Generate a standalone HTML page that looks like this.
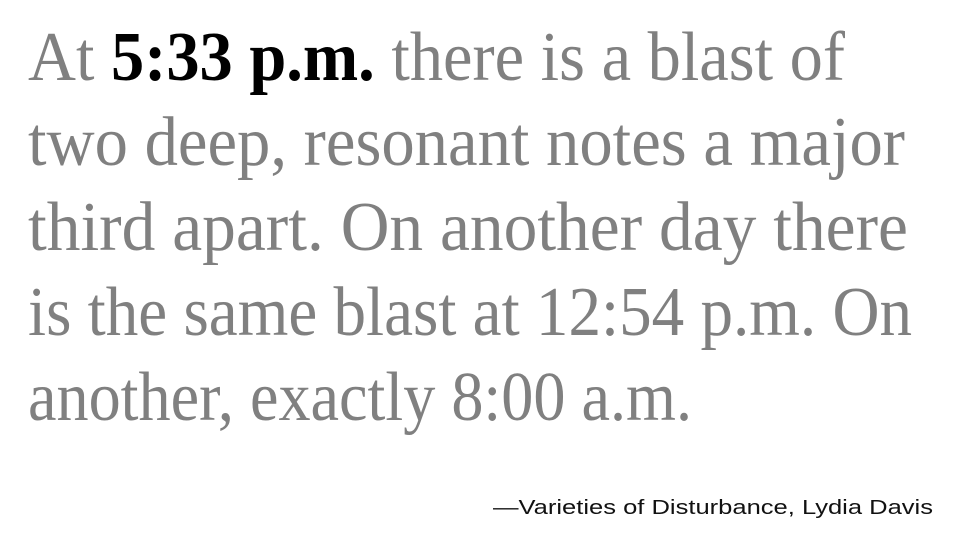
<!DOCTYPE html>
<html><head><meta charset="utf-8"><style>
html,body{margin:0;padding:0;background:#fff;width:960px;height:540px;overflow:hidden}
svg{display:block}
</style></head><body>
<svg width="960" height="540" viewBox="0 0 960 540" xmlns="http://www.w3.org/2000/svg">
<g font-family="Liberation Serif, serif" font-size="70" fill="#808080">
<text x="28" y="80" textLength="817" lengthAdjust="spacingAndGlyphs">At <tspan font-weight="bold" fill="#000">5:33 p.m.</tspan> there is a blast of</text>
<text x="28" y="165" textLength="877" lengthAdjust="spacingAndGlyphs">two deep, resonant notes a major</text>
<text x="28" y="250" textLength="880" lengthAdjust="spacingAndGlyphs">third apart. On another day there</text>
<text x="28" y="335" textLength="884" lengthAdjust="spacingAndGlyphs">is the same blast at 12:54 p.m. On</text>
<text x="28" y="420" textLength="664" lengthAdjust="spacingAndGlyphs">another, exactly 8:00 a.m.</text>
</g>
<text x="933" y="514" text-anchor="end" font-family="Liberation Sans, sans-serif" font-size="20" fill="#111" textLength="440" lengthAdjust="spacingAndGlyphs">—Varieties of Disturbance, Lydia Davis</text>
</svg>
</body></html>
